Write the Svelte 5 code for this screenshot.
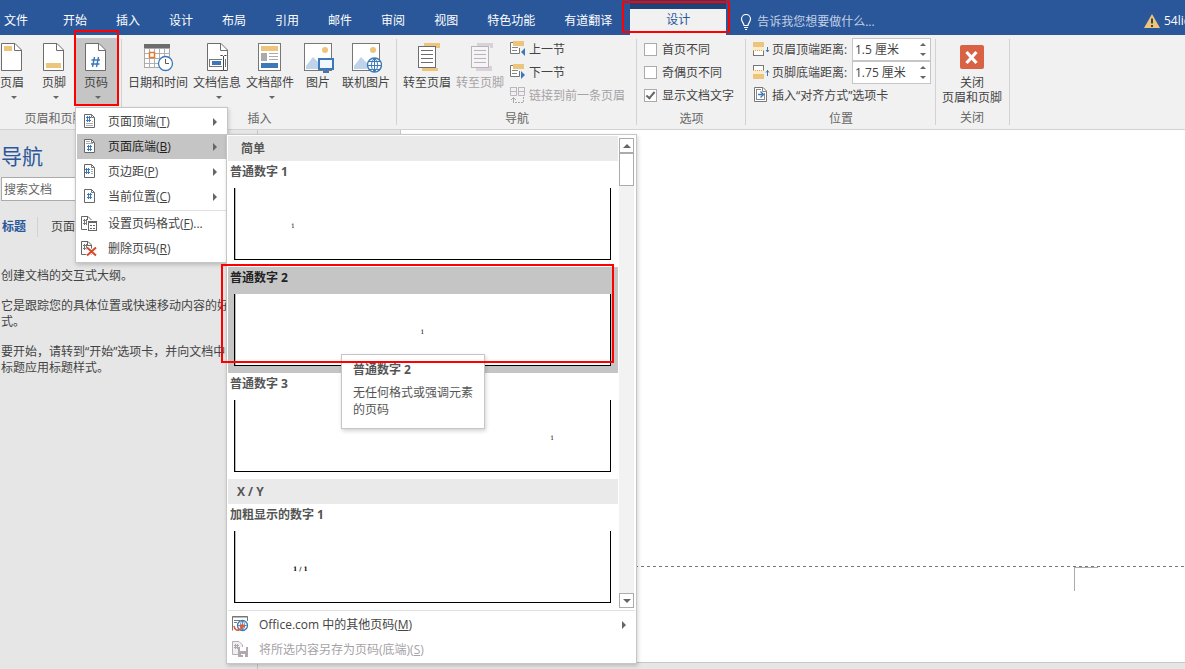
<script>
  const tabs = ['开始', '插入', '设计', '布局', '引用', '邮件', '审阅', '视图', '特色功能', '有道翻译'];
  const headerFooter = [
    { icon: 'header', label: '页眉', drop: true },
    { icon: 'footer', label: '页脚', drop: true },
    { icon: 'number', label: '页码', drop: true, open: true }
  ];
  const insert = [
    { icon: 'calendar', label: '日期和时间' },
    { icon: 'docinfo', label: '文档信息', drop: true },
    { icon: 'parts', label: '文档部件', drop: true },
    { icon: 'picture', label: '图片' },
    { icon: 'online', label: '联机图片' }
  ];
  const go = [
    { icon: 'gotohead', label: '转至页眉' },
    { icon: 'gotofoot', label: '转至页脚', off: true }
  ];
  const sections = [
    { icon: 'prev', label: '上一节' },
    { icon: 'next', label: '下一节' },
    { icon: 'link', label: '链接到前一条页眉', off: true }
  ];
  const options = [
    { id: 'first', label: '首页不同', on: false },
    { id: 'oddeven', label: '奇偶页不同', on: false },
    { id: 'showdoc', label: '显示文档文字', on: true }
  ];
  const distances = [
    { id: 'top', icon: 'disttop', label: '页眉顶端距离:', value: '1.5 厘米' },
    { id: 'bottom', icon: 'distbottom', label: '页脚底端距离:', value: '1.75 厘米' }
  ];
  const menu = [
    { icon: 'mtop', label: '页面顶端', key: 'T', sub: true },
    { icon: 'mbottom', label: '页面底端', key: 'B', sub: true, active: true },
    { icon: 'mmargin', label: '页边距', key: 'P', sub: true },
    { icon: 'mcurrent', label: '当前位置', key: 'C', sub: true },
    { icon: 'mformat', label: '设置页码格式', key: 'F', tail: '...', split: true },
    { icon: 'mdelete', label: '删除页码', key: 'R' }
  ];
  const gallery = [
    { title: '简单', items: [
      { name: '普通数字 1', mark: '1', align: 'left' },
      { name: '普通数字 2', mark: '1', align: 'center', active: true },
      { name: '普通数字 3', mark: '1', align: 'right' }
    ] },
    { title: 'X / Y', items: [{ name: '加粗显示的数字 1', mark: '1 / 1', align: 'left', bold: true }] }
  ];
</script>

{#snippet page()}
  <path d="M.5 .5H14L20.500 7V27.500H.5Z" transform="translate(5 0)" fill="#fff" stroke="#6d6d6d" />
  <path d="M18.500 .5V7.500H25.500" fill="none" stroke="#6d6d6d" />
{/snippet}

{#snippet picture()}
  <rect x="2.500" y=".5" width="27" height="27" fill="#fff" stroke="#777" />
  <path d="M4 26V23L11 14L17 20V26Z" fill="#bfd3ea" />
  <circle cx="23" cy="7" r="3" fill="#ecc47c" />
{/snippet}

{#snippet big(name)}
  <svg class="big-icon" width="32" height="30" viewBox="0 0 32 30" aria-hidden="true">
    {#if name === 'header'}
      {@render page()}<rect x="8" y="3" width="8" height="5" fill="#ecc47c" />
    {:else if name === 'footer'}
      {@render page()}<rect x="8" y="20" width="15" height="5" fill="#ecc47c" />
    {:else if name === 'number'}
      {@render page()}<path d="M14.500 14L12.500 24M18.500 14L16.500 24M11.500 17H20M11 21H19.500" stroke="#3d79b8" stroke-width="1.400" />
    {:else if name === 'calendar'}
      <g transform="translate(1 0)">
        <rect x="1.500" y="5.500" width="25" height="19" fill="#fff" stroke="#aaa" />
        <path d="M6.500 6V25M11.500 6V25M16.500 6V25M21.500 6V25M2 10.500H26M2 15.500H26M2 20.500H26" stroke="#b0b0b0" />
        <rect x="1" y="1" width="26" height="4" fill="#6d6d6d" />
        <rect x="6.500" y="9.500" width="5" height="5" fill="#fff" stroke="#e8772e" stroke-width="1.500" />
        <circle cx="22.500" cy="20.500" r="7" fill="#fff" stroke="#3d79b8" stroke-width="1.300" />
        <path d="M22.500 16V20.500H26" fill="none" stroke="#555" />
      </g>
    {:else if name === 'docinfo'}
      <g transform="translate(1 0)">
        {@render page()}
        <rect x="7.500" y="16.500" width="16" height="7" fill="#fff" stroke="#777" />
        <rect x="10" y="18" width="9" height="4" fill="#3d79b8" />
        <path d="M21.500 13V27" stroke="#fff" stroke-width="3" />
        <path d="M18.500 12.500H20.500L21.500 13.500L22.500 12.500H24.500M21.500 13V27M18.500 27.500H20.500L21.500 26.500L22.500 27.500H24.500" fill="none" stroke="#444" />
      </g>
    {:else if name === 'parts'}
      <rect x="4.500" y=".5" width="22" height="27" fill="#fff" stroke="#777" />
      <rect x="7" y="3" width="17" height="5" fill="#ecc47c" />
      <rect x="7" y="10" width="6" height="8" fill="#aaa" />
      <path d="M15 10.500H24M15 13.500H24M15 16.500H24" stroke="#aaa" />
      <rect x="7" y="20" width="17" height="5" fill="#3d79b8" />
    {:else if name === 'picture'}
      {@render picture()}
      <rect x="17" y="16" width="14" height="10" fill="#f1f8ff" stroke="#3d79b8" stroke-width="2" />
      <path d="M24 26V29M21 29H27" stroke="#3d79b8" stroke-width="2" />
    {:else if name === 'online'}
      {@render picture()}
      <circle cx="24.500" cy="22" r="7" fill="#fff" stroke="#3d79b8" stroke-width="1.400" />
      <path d="M18 22.500H31M24.500 15V29M19 18.500H30M19 26.500H30M24.500 15Q18 22 24.500 29M24.500 15Q31 22 24.500 29" fill="none" stroke="#3d79b8" />
    {:else}
      {@const off = name === 'gotofoot'}
      {@const line = off ? '#b9b4b9' : '#6d6d6d'}
      {@const bar = off ? '#d9d3d9' : '#ecc47c'}
      {#if off}
        <path d="M13 0H29V5H26V3H13Z" fill={bar} /><rect x="12" y="23" width="16" height="5" fill={bar} />
      {:else}
        <path d="M11 23H25V25H27V28H11Z" fill={bar} /><rect x="13" y="0" width="16" height="5" fill={bar} />
      {/if}
      <rect x="7.500" y="3.500" width="17" height="21" fill={off ? '#f7f4f7' : '#fff'} stroke={line} />
      <path d="M10 7.500H22M10 11.500H22M10 15.500H22M10 19.500H22" stroke={line} />
    {/if}
  </svg>
{/snippet}

{#snippet small(name)}
  <svg class="small-icon" width="16" height="16" viewBox="0 0 16 16" aria-hidden="true">
    {#if name === 'prev' || name === 'next'}
      <path d="M3 1.500H.5V12.500H9.500V7" fill="#fff" stroke="#777" />
      <rect x="3" y="0" width="11" height="5" fill="#ecc47c" />
      <path d="M2 6.500H8M2 9.500H7" stroke="#888" />
      {#if name === 'prev'}<path d="M15 7V15L11 11Z" fill="#3d79b8" />{:else}<path d="M11 7V15L15 11Z" fill="#3d79b8" />{/if}
    {:else if name === 'link'}
      <path d="M.5 0V8.500H6.500V0M8.500 0V8.500H14.500V0M.5 4.500H6.500M8.500 4.500H14.500M0 .5H7M8 .5H15" fill="none" stroke="#bcb6bc" />
      <path d="M3.500 16V11M1 13L3.500 10.500L6 13" fill="none" stroke="#aaa" />
      <path d="M5 15.500H14M13.500 15V10" fill="none" stroke="#aaa" stroke-dasharray="2 1" />
    {:else if name === 'disttop'}
      <rect x=".5" y="1.500" width="10" height="13" fill="#fff" stroke="#777" />
      <rect x="0" y="1" width="11" height="5" fill="#ecc47c" /><rect x="0" y="6" width="11" height="4" fill="#fbeccd" />
      <path d="M0 9.500H11" stroke="#dba94a" stroke-dasharray="1 1" />
      <path d="M14.500 6V11M13 9L14.500 11L16 9" fill="none" stroke="#3d79b8" />
    {:else if name === 'distbottom'}
      <rect x=".5" y="1.500" width="10" height="13" fill="#fff" stroke="#777" />
      <rect x="0" y="10" width="11" height="5" fill="#ecc47c" /><rect x="0" y="6" width="11" height="4" fill="#fbeccd" />
      <path d="M0 6.500H11" stroke="#dba94a" stroke-dasharray="1 1" />
      <path d="M14.500 12V6M13 8.500L14.500 6.500L16 8.500" fill="none" stroke="#3d79b8" />
    {:else if name === 'aligntab'}
      <path d="M1.500 .5H10L13.500 4V14.500H1.500Z" fill="#fff" stroke="#777" />
      <path d="M9.500 1V4.500H14M3.500 3V13M11.500 6V13M3 12.500H12M3 2.500H8" fill="none" stroke="#888" />
      <path d="M5 7.500H10.500M7.500 4.500L10.500 7.500L7.500 10.500" fill="none" stroke="#3d79b8" stroke-width="1.400" />
    {:else if name === 'office'}
      <path d="M.5 14.500V.5H15.500V5" fill="none" stroke="#777" />
      <path d="M0 1H16M2 4.500H8M2 6.500H5" stroke="#777" />
      <circle cx="10.500" cy="9.500" r="5" fill="#fff" stroke="#3d79b8" stroke-width="1.300" />
      <path d="M6 9.500H15M10.500 5V14M10.500 4.500Q6 9 10.500 14.500M10.500 4.500Q15 9 10.500 14.500" fill="none" stroke="#3d79b8" stroke-width=".8" />
      <path d="M2 10Q3 15 7 14Q10 13 10.500 9M8 11L10.500 8.500L12.500 11.500" fill="none" stroke="#e05a34" stroke-width="1.600" />
    {:else if name === 'save'}
      <path d="M.5 .5H7L10.500 4V13.500H.5Z" fill="#f3eef3" stroke="#b5b0b5" />
      <path d="M3.500 3V8M5.500 3V8M2 4.500H7M2 6.500H7" stroke="#aaa" />
      <rect x="6" y="6" width="10" height="10" fill="#b0aab0" /><path d="M8 6H14V10H8ZM9 13H13V16H11V14H9Z" fill="#fff" />
    {:else if name === 'mformat' || name === 'mdelete'}
      <g transform="translate(0 1)">
        <path d="M.5 .5H7L10.500 4V13.500H.5Z" fill="#fff" stroke="#666" /><path d="M6.500 .5V4.500H10.500" fill="none" stroke="#666" />
        <path d="M3.500 3V9M5.500 3V9M2 4.500H7M2 7.500H7" stroke="#777" />
        {#if name === 'mformat'}
          <rect x="6" y="4" width="10" height="11" fill="#fff" />
          <rect x="7.500" y="5.500" width="8" height="9" fill="#fff" stroke="#666" /><path d="M7 6.500H16M9 9.500H11M12 9.500H14M9 12.500H11M12 12.500H14" stroke="#666" />
        {:else}
          <path d="M6 6.500L15 14.500M15 6.500L6 14.500" stroke="#fff" stroke-width="4" /><path d="M6 6.500L15 14.500M15 6.500L6 14.500" stroke="#d6492a" stroke-width="2" />
        {/if}
      </g>
    {:else}
      <g transform="translate(1 0)">
        <path d="M2.500 1.500H9.500L12.500 4.500V14.500H2.500Z" fill="#fff" stroke="#666" /><path d="M9.500 1.500V4.500H12.500" fill="none" stroke="#777" />
        {#if name === 'mtop'}
          <path d="M5.500 3V9M7.500 3V9M4 4.500H9M4 7.500H9" stroke="#3d79b8" /><path d="M4 10.500H11M4 12.500H11M10 8.500H11" stroke="#aaa" />
        {:else if name === 'mbottom'}
          <path d="M6.500 7V13M8.500 7V13M5 8.500H10M5 11.500H10" stroke="#3d79b8" /><path d="M4 3.500H8M4 5.500H11" stroke="#aaa" />
        {:else if name === 'mmargin'}
          <path d="M4.500 5V11M6.500 5V11M3 6.500H8M3 9.500H8" stroke="#3d79b8" /><path d="M9 6.500H11M9 8.500H11M9 10.500H11" stroke="#aaa" />
        {:else}
          <path d="M6.500 5V11M8.500 5V11M5 6.500H10M5 9.500H10" stroke="#3d79b8" />
        {/if}
      </g>
    {/if}
  </svg>
{/snippet}

{#snippet bigButton(b)}
  <button class="big" class:open={b.open} disabled={b.off}>
    {@render big(b.icon)}
    <span>{b.label}</span>
    {#if b.drop}<i class="down"></i>{/if}
  </button>
{/snippet}

<div class="app">
  <nav class="tabs" aria-label="功能区">
    <button class="file">文件</button>
    {#each tabs as t}<button>{t}</button>{/each}
    <button class="context">设计</button>
    <label class="tell">
      <svg width="12" height="16" viewBox="0 0 12 16" aria-hidden="true"><path d="M4 11.500C4 9 1.500 8 1.500 5A4.500 4.500 0 0 1 10.500 5C10.500 8 8 9 8 11.500ZM4 13.500H8M5 15.500H7" fill="none" stroke="#fff" stroke-width="1.200" /></svg>
      <input type="text" placeholder="告诉我您想要做什么..." aria-label="告诉我" />
    </label>
    <div class="user">
      <svg width="16" height="14" viewBox="0 0 16 14" aria-hidden="true"><path d="M8 0L16 14H0Z" fill="#ecc47c" /><path d="M8 4.500V9.500M8 11V13" stroke="#444" stroke-width="2" /></svg>
      <span>54lid</span>
    </div>
  </nav>

  <div class="ribbon">
    <section class="group g-hf">
      <div class="row tight">{#each headerFooter as b}{@render bigButton(b)}{/each}</div>
      <h2>页眉和页脚</h2>
    </section>
    <section class="group g-insert">
      <div class="row">{#each insert as b}{@render bigButton(b)}{/each}</div>
      <h2>插入</h2>
    </section>
    <section class="group g-nav">
      <div class="row">
        {#each go as b}{@render bigButton(b)}{/each}
        <div class="list">
          {#each sections as s}<button class="line" disabled={s.off}>{@render small(s.icon)}{s.label}</button>{/each}
        </div>
      </div>
      <h2>导航</h2>
    </section>
    <section class="group g-opt">
      <div class="list">
        {#each options as o}
          <label class="line check" for={o.id}><input type="checkbox" id={o.id} checked={o.on} />{o.label}</label>
        {/each}
      </div>
      <h2>选项</h2>
    </section>
    <section class="group g-pos">
      <div class="list">
        {#each distances as d}
          <div class="line">
            {@render small(d.icon)}<label for={d.id}>{d.label}</label>
            <span class="spin"><input id={d.id} type="text" value={d.value} /><span class="steps"><i class="up"></i><i class="down"></i></span></span>
          </div>
        {/each}
        <button class="line">{@render small('aligntab')}插入“对齐方式”选项卡</button>
      </div>
      <h2>位置</h2>
    </section>
    <section class="group g-close">
      <button class="close">
        <svg width="24" height="24" viewBox="0 0 24 24" aria-hidden="true"><rect width="24" height="24" rx="2" fill="#d96245" /><path d="M6.500 7L16.500 18M16.500 7L6.500 18" stroke="#fff" stroke-width="3.200" /></svg>
        <span>关闭<br />页眉和页脚</span>
      </button>
      <h2>关闭</h2>
    </section>
  </div>

  <div class="work">
    <aside>
      <h1>导航</h1>
      <input class="search" type="text" placeholder="搜索文档" aria-label="搜索文档" />
      <div class="views"><button class="on">标题</button><button>页面</button></div>
      <p>创建文档的交互式大纲。</p>
      <p>它是跟踪您的具体位置或快速移动内容的好方<br />式。</p>
      <p>要开始，请转到“开始”选项卡，并向文档中的<br />标题应用标题样式。</p>
    </aside>
    <main>
      <div class="sheet"><div class="foot"><div class="corner"></div></div></div>
    </main>
  </div>

  <div class="popup menu">
    {#each menu as m}
      {#if m.split}<hr />{/if}
      <button class="item" class:active={m.active}>
        <span class="glyph">{@render small(m.icon)}</span>
        <span>{m.label}(<u>{m.key}</u>){m.tail ?? ''}</span>
        {#if m.sub}<i class="right"></i>{/if}
      </button>
    {/each}
  </div>

  <div class="popup gallery">
    <div class="scroll">
      <div class="entries">
        {#each gallery as g}
          <h3>{g.title}</h3>
          {#each g.items as e}
            <button class="entry" class:active={e.active}>
              <b>{e.name}</b>
              <span class="preview {e.align}" class:bold={e.bold}>{e.mark}</span>
            </button>
          {/each}
        {/each}
      </div>
      <div class="bar">
        <button aria-label="向上"><i class="up"></i></button>
        <div class="thumb"></div>
        <button class="last" aria-label="向下"><i class="down"></i></button>
      </div>
    </div>
    <hr />
    <button class="item"><span class="glyph">{@render small('office')}</span><span>Office.com 中的其他页码(<u>M</u>)</span><i class="right"></i></button>
    <button class="item" disabled><span class="glyph">{@render small('save')}</span><span>将所选内容另存为页码(底端)(<u>S</u>)</span></button>
  </div>

  <div class="popup tip" role="tooltip"><b>普通数字 2</b><span>无任何格式或强调元素的页码</span></div>

  <div class="mark m1"></div>
  <div class="mark m2"></div>
  <div class="mark m3"></div>
</div>

<style>
  :global(body) { margin: 0; }
  .app {
    position: relative;
    display: flex;
    flex-direction: column;
    min-height: 100vh;
    overflow: hidden;
    background: #e6e6e6;
    color: #444;
    font: 12px/16px "Open Sans", "Noto Sans CJK SC", sans-serif;
  }
  .app *, .app *::after { box-sizing: border-box; }
  button, input { font: inherit; color: inherit; margin: 0; padding: 0; border: 0; background: none; }
  button { white-space: nowrap; text-align: left; }
  h1, h2, h3, p, hr { margin: 0; font-weight: 400; }
  svg { display: block; flex: none; }
  i { display: block; flex: none; width: 0; height: 0; border: 3px solid transparent; }
  .down { border-top-color: #666; border-bottom: 0; }
  .up { border-bottom-color: #666; border-top: 0; }
  i.right { border-width: 4px; border-left-color: #666; border-right: 0; }

  .tabs { display: flex; gap: 1px; height: 35px; background: #2a579a; color: #fff; overflow: hidden; }
  .tabs > button { padding: 6px 14px 0; flex: none; }
  .tabs > .file { padding-left: 4px; margin-right: 6px; }
  .tabs > .context {
    width: 96px;
    margin-left: 3px;
    padding-top: 0;
    text-align: center;
    color: #2a579a;
    background: #f1f1f1;
    border-top: 9px solid #1f4277;
    line-height: 22px;
    padding-bottom: 4px;
  }
  .tell { display: flex; align-items: center; gap: 5px; padding: 8px 0 0 13px; flex: 1; }
  .tell input { flex: 1; min-width: 0; }
  .tell input::placeholder { color: #c3d0e4; opacity: 1; }
  .user { display: flex; align-items: center; gap: 4px; padding-top: 7px; width: 41px; overflow: hidden; flex: none; }

  .ribbon { display: flex; height: 95px; background: #f1f1f1; border-bottom: 1px solid #d2d2d2; padding-top: 3px; }
  .group { position: relative; flex: none; padding-left: 4px; display: flex; flex-direction: column; }
  .group::after { content: ""; position: absolute; right: 0; top: 1px; bottom: 4px; width: 1px; background: #d2d2d2; }
  .group h2 { margin-left: -4px; font-size: 12px; line-height: 26px; text-align: center; color: #666; }
  .g-hf { width: 131px; margin-left: -9px; padding-left: 0; }
  .g-insert { width: 275px; }
  .g-nav { width: 240px; }
  .g-opt { width: 109px; padding-left: 7px; }
  .g-pos { width: 190px; padding-left: 7px; }
  .g-close { width: 74px; padding: 0 2px 0 0; }
  .g-close h2 { margin-left: 0; }
  .g-opt h2, .g-pos h2 { margin-left: -7px; }
  .row { display: flex; gap: 1px; height: 68px; }
  .tight { gap: 0; }
  .big { display: flex; flex-direction: column; align-items: center; min-width: 42px; padding: 5px 2px 0; line-height: 20px; height: 68px; }
  .big .down { margin: 3px 0 0 3px; }
  .big.open { background: #c5c5c5; }
  button:disabled { color: #a6a2a6; }
  .list { display: flex; flex-direction: column; height: 68px; }
  .row .list { padding-left: 3px; }
  .line { display: flex; align-items: center; gap: 3px; height: 23px; flex: none; white-space: nowrap; }
  .small-icon { margin-bottom: 1px; overflow: visible; }
  .check { gap: 5px; }
  .check input { appearance: none; width: 13px; height: 13px; background: #fff; border: 1px solid #ababab; display: grid; place-items: center; }
  .check input:checked::after { content: ""; width: 5px; height: 9px; border: solid #666; border-width: 0 2px 2px 0; transform: translateY(-1px) rotate(40deg); }
  .spin { display: flex; align-items: center; margin-left: auto; margin-right: 5px; width: 79px; height: 23px; background: #fff; border: 1px solid #c6c6c6; }
  .spin input { flex: 1; min-width: 0; padding-left: 2px; }
  .steps { display: flex; flex-direction: column; gap: 7px; padding-right: 4px; }
  .close { display: flex; flex-direction: column; align-items: center; gap: 6px; height: 68px; padding-top: 7px; line-height: 15px; text-align: center; }

  .work { flex: 1; display: flex; }
  aside { width: 258px; flex: none; border-right: 1px solid #c6c6c6; padding: 12px 0 0 1px; white-space: nowrap; overflow: hidden; }
  aside h1 { font-size: 21px; line-height: 28px; color: #2a579a; }
  .search { display: block; width: 240px; height: 24px; margin-top: 7px; padding-left: 2px; background: #fff; border: 1px solid #ababab; }
  .search::placeholder { color: #666; opacity: 1; }
  .views { display: flex; height: 20px; margin: 16px 0 31px; padding-left: 1px; }
  .views button { padding-right: 11px; }
  .views button + button { border-left: 1px solid #d2d2d2; padding-left: 13px; }
  .views .on { color: #2a579a; font-weight: 700; }
  aside p { margin-bottom: 14px; }
  main { flex: 1; min-width: 0; display: flex; padding: 0 0 6px 142px; }
  .sheet { flex: 1; display: flex; flex-direction: column; justify-content: flex-end; background: #fff; border-left: 1px solid #c6c6c6; border-bottom: 1px solid #c6c6c6; }
  .foot { height: 96px; background: repeating-linear-gradient(90deg, #777 0 3px, #fff 3px 6px) top / 100% 1px no-repeat; padding-top: 1px; }
  .corner { width: 24px; height: 24px; margin: 0 87px 0 auto; border: solid #ababab; border-width: 1px 0 0 1px; }

  .popup { position: absolute; background: #fff; border: 1px solid #c6c6c6; box-shadow: 1px 2px 4px rgb(0 0 0 / 18%); }
  .popup hr { border: 0; height: 1px; background: #e1e1e1; }
  .item { display: flex; align-items: center; width: 100%; height: 25px; }
  .item .right { margin-left: auto; margin-right: 9px; }
  .item.active { background: #c5c5c5; color: #222; }
  .glyph { width: 27px; flex: none; }
  .menu { left: 75px; top: 107px; width: 153px; padding: 1px; }
  .menu .item { padding-left: 4px; }
  .menu hr { margin: 1px 0 0 32px; }
  .gallery { left: 226px; top: 134px; width: 411px; padding: 1px; }
  .scroll { display: flex; gap: 1px; }
  .entries { flex: 1; color: #555; }
  .gallery h3 { padding-left: 13px; font-size: 12px; font-weight: 700; line-height: 25px; height: 25px; background: #eaeaea; }
  .gallery h3:not(:first-child) { padding-left: 9px; }
  .entry { display: flex; flex-direction: column; justify-content: flex-start; width: 100%; height: 106px; padding: 0 7px 0 6px; }
  .entry b { height: 27px; margin-left: -4px; line-height: 22px; }
  .entry.active { background: #c5c5c5; color: #222; }
  .preview { align-self: stretch; height: 72px; padding: 34px 56px 0; border: solid #000; border-width: 0 1px 1px; background: #fff; box-shadow: inset 1px 0 #bbb; font: 400 6px/8px "DejaVu Serif", serif; color: #000; }
  .preview.bold { font-weight: 700; padding-left: 58px; }
  .preview.center { text-align: center; }
  .preview.right { text-align: right; }
  .bar { display: flex; flex-direction: column; width: 15px; margin: 2px 0 2px; background: #f2f2f2; }
  .scroll { padding-right: 1px; }
  .bar button { display: grid; place-items: center; width: 15px; height: 15px; background: #fff; border: 1px solid #ababab; }
  .bar .last { margin-top: auto; }
  .bar i { border-width: 4px; }
  .bar .up { border-top: 0; }
  .bar .down { border-bottom: 0; }
  .thumb { height: 33px; background: #fff; border: 1px solid #ababab; }
  .gallery > hr { margin-bottom: 1px; }
  .gallery .item { padding-left: 4px; }
  .tip { left: 341px; top: 354px; width: 144px; height: 75px; padding: 6px 10px 6px 11px; line-height: 17px; color: #555; }
  .tip b, .tip span { display: block; }
  .tip b { margin-bottom: 6px; }
  .mark { position: absolute; border: 2px solid #f00; pointer-events: none; }
  .m1 { left: 74px; top: 30px; width: 45px; height: 76px; }
  .m2 { left: 622px; top: 1px; width: 108px; height: 32px; }
  .m3 { left: 221px; top: 264px; width: 393px; height: 99px; }
</style>
